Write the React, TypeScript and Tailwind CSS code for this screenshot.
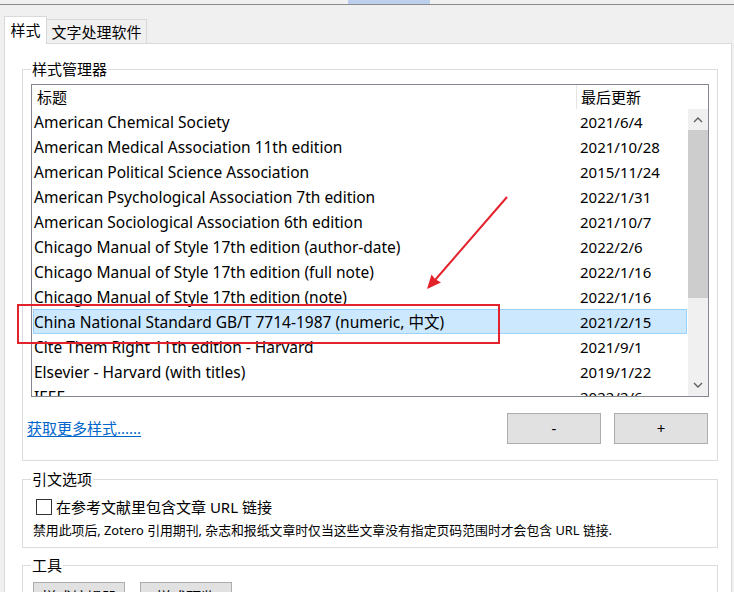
import React from 'react'

const rows: [string, string][] = [
  ['American Chemical Society', '2021/6/4'],
  ['American Medical Association 11th edition', '2021/10/28'],
  ['American Political Science Association', '2015/11/24'],
  ['American Psychological Association 7th edition', '2022/1/31'],
  ['American Sociological Association 6th edition', '2021/10/7'],
  ['Chicago Manual of Style 17th edition (author-date)', '2022/2/6'],
  ['Chicago Manual of Style 17th edition (full note)', '2022/1/16'],
  ['Chicago Manual of Style 17th edition (note)', '2022/1/16'],
  ['China National Standard GB/T 7714-1987 (numeric, 中文)', '2021/2/15'],
  ['Cite Them Right 11th edition - Harvard', '2021/9/1'],
  ['Elsevier - Harvard (with titles)', '2019/1/22'],
  ['IEEE', '2022/2/6'],
]

const font = { fontFamily: '"Noto Sans", "Noto Sans CJK SC", sans-serif' }

function Chevron({ up }: { up?: boolean }) {
  return (
    <svg width="10" height="6" viewBox="0 0 10 6" className="block">
      <path d={up ? 'M1 5 L5 1 L9 5' : 'M1 1 L5 5 L9 1'} fill="none" stroke="#606060" strokeWidth="1.4" />
    </svg>
  )
}

function StyleList() {
  return (
    <div className="w-[678px] h-[313px] border border-[#828790] bg-white flex flex-col overflow-hidden">
      <div className="h-[24px] flex items-center shrink-0 text-[15px] leading-[20px]">
        <div className="w-[545px] pl-[5px] h-full flex items-center border-r border-[#e5e5e5]">标题</div>
        <div className="pl-[4px]">最后更新</div>
      </div>
      <div className="flex flex-1 min-h-0">
        <div className="w-[656px] overflow-hidden">
          {rows.map(([t, d], i) => (
            <div
              key={t}
              className={`h-[25px] mx-px flex items-center text-[15.5px] leading-[20px] border ${
                i === 8 ? 'bg-[#cce8ff] border-[#99d1ff]' : 'border-transparent'
              }`}
            >
              <div className="w-[546px] whitespace-nowrap">{t}</div>
              <div className="text-[15px]">{d}</div>
            </div>
          ))}
        </div>
        <div className="w-[20px] bg-[#f0f0f0] flex flex-col">
          <div className="h-[21px] flex items-center justify-center"><Chevron up /></div>
          <div className="h-[168px] bg-[#cdcdcd]"></div>
          <div className="flex-1 flex items-end justify-center pb-[8px]"><Chevron /></div>
        </div>
      </div>
    </div>
  )
}

function Btn({ children, w = 'w-[94px]' }: { children: React.ReactNode; w?: string }) {
  return (
    <div className={`${w} h-[31px] bg-[#e1e1e1] border border-[#adadad] flex items-center justify-center text-[15px]`}>
      {children}
    </div>
  )
}

export default function App() {
  return (
    <div className="relative w-[734px] h-[592px] overflow-hidden bg-[#f0f0f0] text-black" style={font}>
      <div className="h-[4px] flex">
        <div className="ml-[348px] w-[82px] bg-[#bcd0ee]"></div>
      </div>
      <div className="h-px bg-[#8a8a8a]"></div>

      <div className="h-[38px] flex items-end pl-[4px]">
        <div className="relative z-10 -mb-px w-[43px] h-[28px] bg-white border border-b-0 border-[#d9d9d9] flex items-center justify-center text-[15px] leading-[20px] pb-[2px]">
          样式
        </div>
        <div className="w-[100px] h-[24px] bg-[#f0f0f0] border border-l-0 border-b-0 border-[#d9d9d9] flex items-center justify-center text-[15px] leading-[20px]">
          文字处理软件
        </div>
      </div>

      <div className="ml-[4px] w-[728px] h-[560px] bg-white border border-[#d9d9d9] pl-[17px] pt-[15px]">
        <fieldset className="w-[696px] h-[402px] border border-[#dcdcdc] px-[8px] pt-[5px]">
          <legend className="px-[1px] text-[15px] leading-[20px]">样式管理器</legend>
          <StyleList />
          <div className="mt-[16px] flex items-center">
            <a className="-ml-[4px] text-[15px] text-[#0066cc] underline underline-offset-2">获取更多样式......</a>
            <div className="ml-auto mr-[1px] flex gap-[13px]">
              <Btn>-</Btn>
              <Btn>+</Btn>
            </div>
          </div>
        </fieldset>

        <fieldset className="mt-[8px] w-[696px] h-[79px] border border-[#dcdcdc] px-[8px] pt-[8px]">
          <legend className="px-[1px] text-[15px] leading-[20px]">引文选项</legend>
          <div className="h-[20px] flex items-center">
            <div className="ml-[5px] w-[16px] h-[16px] border border-[#333333] bg-white"></div>
            <span className="ml-[4px] text-[15px] leading-[20px]">在参考文献里包含文章 URL 链接</span>
          </div>
          <div className="mt-[4px] ml-[2px] text-[12.85px] leading-[18px] whitespace-nowrap">
            禁用此项后, Zotero 引用期刊, 杂志和报纸文章时仅当这些文章没有指定页码范围时才会包含 URL 链接.
          </div>
        </fieldset>

        <fieldset className="mt-[7px] w-[696px] h-[80px] border border-[#dcdcdc] px-[8px] pt-[7px]">
          <legend className="px-[1px] text-[15px] leading-[20px]">工具</legend>
          <div className="flex gap-[15px] ml-[2px]">
            <Btn w="w-[92px]">样式编辑器</Btn>
            <Btn w="w-[92px]">样式预览</Btn>
          </div>
        </fieldset>
      </div>

      <div className="absolute left-[17px] top-[304px] w-[483px] h-[40px] border-2 border-[#e3222b] pointer-events-none"></div>
      <svg className="absolute left-0 top-0 pointer-events-none" width="734" height="592">
        <line x1="507" y1="197" x2="429" y2="287" stroke="#e3222b" strokeWidth="2" />
        <polygon points="427,289 431.5,274.5 435,279 441,282.5" fill="#e3222b" />
      </svg>
    </div>
  )
}
